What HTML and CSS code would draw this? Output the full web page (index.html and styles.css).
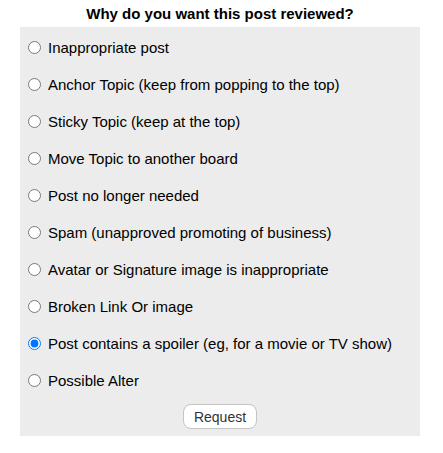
FILE: index.html
```html
<!DOCTYPE html>
<html>
<head>
<meta charset="utf-8">
<link rel="stylesheet" href="styles.css">
</head>
<body>
<div class="wrap">
  <h1 class="title">Why do you want this post reviewed?</h1>
  <form class="box">
    <label class="opt"><input type="radio" name="r"><span>Inappropriate post</span></label>
    <label class="opt"><input type="radio" name="r"><span>Anchor Topic (keep from popping to the top)</span></label>
    <label class="opt"><input type="radio" name="r"><span>Sticky Topic (keep at the top)</span></label>
    <label class="opt"><input type="radio" name="r"><span>Move Topic to another board</span></label>
    <label class="opt"><input type="radio" name="r"><span>Post no longer needed</span></label>
    <label class="opt"><input type="radio" name="r"><span>Spam (unapproved promoting of business)</span></label>
    <label class="opt"><input type="radio" name="r"><span>Avatar or Signature image is inappropriate</span></label>
    <label class="opt"><input type="radio" name="r"><span>Broken Link Or image</span></label>
    <label class="opt"><input type="radio" name="r" checked><span>Post contains a spoiler (eg, for a movie or TV show)</span></label>
    <label class="opt"><input type="radio" name="r"><span>Possible Alter</span></label>
    <div class="actions"><button type="button" class="btn">Request</button></div>
  </form>
</div>
</body>
</html>
```
FILE: styles.css
```css
html, body {
  margin: 0;
  padding: 0;
  background: #fff;
}
body {
  font-family: "Liberation Sans", Arial, sans-serif;
  color: #000;
}
.wrap {
  width: 400px;
  margin-left: 20px;
}
.title {
  margin: 0;
  height: 27px;
  font-size: 15px;
  font-weight: bold;
  text-align: center;
  line-height: 28px;
}
.box {
  margin: 0;
  background: #ececec;
  padding: 2px 0 7px 0;
  display: flex;
  flex-direction: column;
}
.opt {
  display: flex;
  align-items: center;
  height: 37px;
  font-size: 15px;
}
.opt input {
  margin: 0 7px 0 8px;
  width: 13px;
  height: 13px;
}
.actions {
  display: flex;
  justify-content: center;
  margin-top: 5px;
}
.btn {
  font-family: "Liberation Sans", Arial, sans-serif;
  font-size: 14px;
  color: #333;
  background: #fff;
  border: 1px solid #c4c4c4;
  border-radius: 8px;
  height: 25px;
  width: 74px;
  padding: 0;
}
```
